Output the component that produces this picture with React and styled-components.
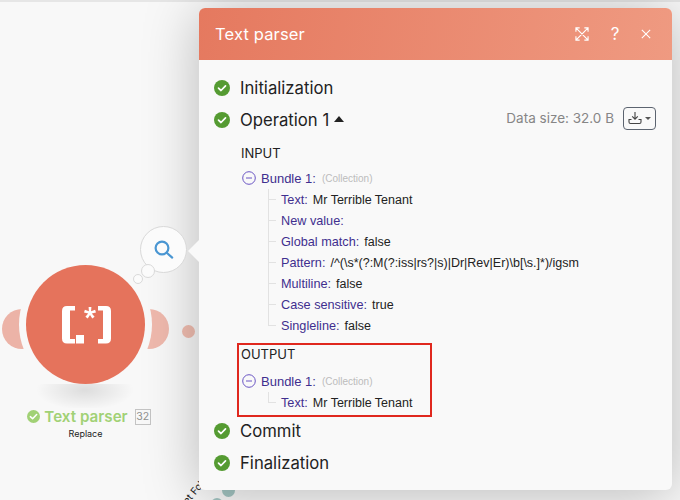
import React from 'react'
import styled, { createGlobalStyle } from 'styled-components'

const Global = createGlobalStyle`
  html, body { margin: 0; padding: 0; background: #f8f8f8; }
  body { font-family: Inter, "Liberation Sans", sans-serif; }
`

const Check = () => (
  <StatusDot>
    <svg width="10" height="10" viewBox="0 0 10 10" fill="none">
      <path d="M1.5 5.2 L4 7.5 L8.5 2.8" stroke="#fff" strokeWidth="1.7" strokeLinecap="round" strokeLinejoin="round" />
    </svg>
  </StatusDot>
)

const Minus = () => (
  <MinusIcon width="14" height="14" viewBox="0 0 14 14" fill="none">
    <circle cx="7" cy="7" r="6.3" stroke="#6a55c4" strokeWidth="1" />
    <path d="M4 7 H10" stroke="#6a55c4" strokeWidth="1" />
  </MinusIcon>
)

const Field = ({ name, value, last }) => (
  <FieldRow $last={last}>
    <FieldName>{name}:</FieldName>
    {value && <FieldValue>{value}</FieldValue>}
  </FieldRow>
)

const Bundle = ({ fields }) => (
  <>
    <BundleRow>
      <Minus />
      <BundleName>Bundle 1:</BundleName>
      <BundleType>(Collection)</BundleType>
    </BundleRow>
    <FieldList>
      {fields.map((f, i) => (
        <Field key={f[0]} name={f[0]} value={f[1]} last={i === fields.length - 1} />
      ))}
    </FieldList>
  </>
)

const inputFields = [
  ['Text', 'Mr Terrible Tenant'],
  ['New value', ''],
  ['Global match', 'false'],
  ['Pattern', '/^(\\s*(?:M(?:iss|rs?|s)|Dr|Rev|Er)\\b[\\s.]*)/igsm'],
  ['Multiline', 'false'],
  ['Case sensitive', 'true'],
  ['Singleline', 'false'],
]

export default function App() {
  return (
    <Canvas>
      <Global />
      <TopLine />

      <Ear $side="left" />
      <Ear $side="right" />
      <SmallDot />
      <NodeCircle>
        <svg width="50" height="40" viewBox="0 0 50 40" fill="#fff">
          <path d="M6 1 H14 V5.5 H9 V34 H14 V38.5 H6 Q1 38.5 1 33.5 V6 Q1 1 6 1 Z" />
          <rect x="15" y="30" width="8" height="8.5" />
          <path d="M37 1 H45 Q50 1 50 6 V33.5 Q50 38.5 45 38.5 H37 V34 H42 V5.5 H37 Z" />
          <path d="M27.6 2 H30.4 L30.1 6.3 L34.1 4.7 L35 7.4 L30.8 8.5 L33.6 11.8 L31.3 13.5 L29 9.9 L26.7 13.5 L24.4 11.8 L27.2 8.5 L23 7.4 L23.9 4.7 L27.9 6.3 Z" />
        </svg>
      </NodeCircle>
      <NodeShadow />
      <NodeLabel>
        <NodeTitle>
          <NodeCheck>
            <svg width="9" height="9" viewBox="0 0 10 10" fill="none">
              <path d="M1.5 5.2 L4 7.5 L8.5 2.8" stroke="#fff" strokeWidth="1.7" strokeLinecap="round" strokeLinejoin="round" />
            </svg>
          </NodeCheck>
          Text parser
          <NodeCount>32</NodeCount>
        </NodeTitle>
        <NodeSub>Replace</NodeSub>
      </NodeLabel>

      <Bubble>
        <svg width="22" height="22" viewBox="0 0 22 22" fill="none" stroke="#4a96d2" strokeWidth="2.2" strokeLinecap="round">
          <circle cx="9" cy="9" r="6.4" />
          <path d="M14 14 L19.2 18.6" />
        </svg>
      </Bubble>
      <BubbleDot $x={141} $y={264} $s={12} />
      <BubbleDot $x={133} $y={274} $s={8} />

      <CanvasText $x={171} $y={483} $r={-50} $size={10}>Get Folder</CanvasText>
      <CanvasText $x={516} $y={480} $r={0} $size={9.5}>Create a folder</CanvasText>
      <Teal $x={222} $y={484} $s={13} />
      <Teal $x={211} $y={498} $s={12} />

      <Panel>
        <Notch />
        <Header>
          <HeaderTitle>Text parser</HeaderTitle>
          <HeaderIcons>
            <svg width="14" height="14" viewBox="0 0 15 15" fill="none" stroke="#fff" strokeWidth="1.2">
              <path d="M1 5 V1 H5 M10 1 H14 V5 M14 10 V14 H10 M5 14 H1 V10 M1.5 1.5 L13.5 13.5 M13.5 1.5 L1.5 13.5" />
            </svg>
            <HelpMark>?</HelpMark>
            <svg width="10" height="10" viewBox="0 0 12 12" fill="none" stroke="#fff" strokeWidth="1.3">
              <path d="M1 1 L11 11 M11 1 L1 11" />
            </svg>
          </HeaderIcons>
        </Header>

        <Body>
          <StepRow>
            <Check />
            <StepName>Initialization</StepName>
          </StepRow>
          <StepRow>
            <Check />
            <StepName>Operation 1</StepName>
            <Caret />
            <DataSize>Data size: 32.0 B</DataSize>
            <DownloadButton>
              <svg width="14" height="14" viewBox="0 0 14 14" fill="none" stroke="#444" strokeWidth="1.1">
                <path d="M7 1 V8 M4.2 5.4 L7 8.2 L9.8 5.4 M3.5 8.5 H1 V11 Q1 12.5 2.5 12.5 H11.5 Q13 12.5 13 11 V8.5 H10.5" />
              </svg>
              <DownCaret />
            </DownloadButton>
          </StepRow>

          <Section>
            <SectionTitle $gap={5}>INPUT</SectionTitle>
            <Bundle fields={inputFields} />
          </Section>

          <OutputBox>
            <SectionTitle $gap={7}>OUTPUT</SectionTitle>
            <Bundle fields={[['Text', 'Mr Terrible Tenant']]} />
          </OutputBox>

          <StepRow>
            <Check />
            <StepName>Commit</StepName>
          </StepRow>
          <StepRow>
            <Check />
            <StepName>Finalization</StepName>
          </StepRow>
        </Body>
      </Panel>
    </Canvas>
  )
}

const Canvas = styled.div`
  position: relative;
  width: 680px;
  height: 500px;
  overflow: hidden;
  background: #f8f8f8;
`

const TopLine = styled.div`
  position: absolute;
  left: 0;
  top: 0;
  width: 680px;
  height: 2px;
  background: #e6e6e6;
`

const Ear = styled.div`
  position: absolute;
  top: 309px;
  left: ${p => (p.$side === 'left' ? '2px' : '129px')};
  width: 40px;
  height: 40px;
  border-radius: 50%;
  background: ${p => (p.$side === 'left' ? '#ecb3a7' : '#efb9ad')};
`

const SmallDot = styled.div`
  position: absolute;
  left: 182px;
  top: 325px;
  width: 13px;
  height: 13px;
  border-radius: 50%;
  background: #f0bdb0;
`

const NodeShadow = styled.div`
  position: absolute;
  left: 36px;
  top: 384px;
  width: 98px;
  height: 24px;
  background: radial-gradient(ellipse 49px 20px at 50% 6px, rgba(0, 0, 0, 0.11), transparent);
`

const NodeCircle = styled.div`
  position: absolute;
  left: 26px;
  top: 265px;
  width: 119px;
  height: 119px;
  border-radius: 50%;
  background: #e5735c;
  box-shadow: 0 0 0 7px #f8f8f8;
  display: flex;
  align-items: center;
  justify-content: center;
`

const NodeLabel = styled.div`
  position: absolute;
  left: 0;
  top: 407px;
  width: 171px;
  display: flex;
  flex-direction: column;
  align-items: center;
`

const NodeTitle = styled.div`
  margin-left: 7px;
  display: flex;
  align-items: center;
  font-size: 15.2px;
  font-weight: 600;
  line-height: 19px;
  color: #a1d175;
`

const NodeCheck = styled.span`
  width: 13px;
  height: 13px;
  margin-right: 4px;
  border-radius: 50%;
  background: #a1d175;
  display: flex;
  align-items: center;
  justify-content: center;
`

const NodeCount = styled.span`
  width: 16px;
  height: 16px;
  margin-left: 7px;
  box-sizing: border-box;
  border: 1px solid #c4c4c4;
  font-size: 10.5px;
  font-weight: 400;
  line-height: 14px;
  text-align: center;
  color: #8f8f8f;
`

const NodeSub = styled.div`
  font-size: 9px;
  line-height: 16px;
  color: #222;
`

const Bubble = styled.div`
  position: absolute;
  z-index: 1;
  left: 140px;
  top: 226px;
  width: 45px;
  height: 45px;
  border: 1px solid #d9d9d9;
  border-radius: 50%;
  background: #fbfbfb;
  display: flex;
  align-items: center;
  justify-content: center;
`

const BubbleDot = styled.div`
  position: absolute;
  z-index: 1;
  left: ${p => p.$x}px;
  top: ${p => p.$y}px;
  width: ${p => p.$s}px;
  height: ${p => p.$s}px;
  border: 1px solid #d9d9d9;
  border-radius: 50%;
  background: #fbfbfb;
`

const CanvasText = styled.div`
  position: absolute;
  left: ${p => p.$x}px;
  top: ${p => p.$y}px;
  font-size: ${p => p.$size}px;
  color: #222;
  white-space: nowrap;
  transform: rotate(${p => p.$r}deg);
`

const Teal = styled.div`
  position: absolute;
  left: ${p => p.$x}px;
  top: ${p => p.$y}px;
  width: ${p => p.$s}px;
  height: ${p => p.$s}px;
  border-radius: 50%;
  background: #a3c5c2;
`

const Panel = styled.div`
  position: absolute;
  left: 199px;
  top: 8px;
  width: 473px;
  height: 482px;
  border-radius: 6px;
  background: #f9f9f9;
  box-shadow: 0 4px 55px rgba(0, 0, 0, 0.26);
`

const Notch = styled.div`
  position: absolute;
  left: -11px;
  top: 232px;
  width: 0;
  height: 0;
  border-top: 11px solid transparent;
  border-bottom: 11px solid transparent;
  border-right: 11px solid #f9f9f9;
`

const Header = styled.div`
  height: 52px;
  padding: 0 16px;
  display: flex;
  align-items: center;
  justify-content: space-between;
  border-radius: 6px 6px 0 0;
  background: linear-gradient(100deg, #e5795f 0%, #ef9a81 100%);
`

const HeaderTitle = styled.div`
  font-size: 16.5px;
  letter-spacing: 0.15px;
  color: #fff;
`

const HeaderIcons = styled.div`
  display: flex;
  align-items: center;
  gap: 20px;
  padding-right: 5px;
`

const HelpMark = styled.span`
  width: 12px;
  font-size: 17px;
  text-align: center;
  color: #fff;
`

const Body = styled.div`
  padding: 12px 16px 0 15px;
`

const StepRow = styled.div`
  height: 32px;
  display: flex;
  align-items: center;
`

const StatusDot = styled.span`
  width: 16px;
  height: 16px;
  margin-right: 10px;
  border-radius: 50%;
  background: #559b32;
  display: flex;
  align-items: center;
  justify-content: center;
`

const StepName = styled.span`
  font-size: 16.7px;
  color: #222;
`

const Caret = styled.span`
  width: 0;
  height: 0;
  margin-left: 5px;
  margin-bottom: 3px;
  border-left: 5px solid transparent;
  border-right: 5px solid transparent;
  border-bottom: 6px solid #222;
`

const DataSize = styled.span`
  margin-left: auto;
  margin-bottom: 4px;
  font-size: 13.5px;
  color: #868686;
`

const DownloadButton = styled.div`
  width: 33px;
  height: 23px;
  margin-left: 9px;
  margin-bottom: 4px;
  box-sizing: border-box;
  border: 1px solid #5c6470;
  border-radius: 4px;
  display: flex;
  align-items: center;
  justify-content: center;
  gap: 3px;
`

const DownCaret = styled.span`
  width: 0;
  height: 0;
  border-left: 3px solid transparent;
  border-right: 3px solid transparent;
  border-top: 3px solid #555;
`

const Section = styled.div`
  margin: 8px 0 0 27px;
  padding-bottom: 7px;
`

const SectionTitle = styled.div`
  height: 18px;
  margin-bottom: ${p => p.$gap}px;
  font-size: 13px;
  line-height: 18px;
  color: #222;
`

const OutputBox = styled.div`
  width: 195px;
  height: 74px;
  margin: 0 0 -2px 23px;
  padding-left: 2px;
  box-sizing: border-box;
  border: 2px solid #e0281e;
`

const BundleRow = styled.div`
  height: 22px;
  display: flex;
  align-items: center;
  font-family: "Liberation Sans", Arial, sans-serif;
  font-size: 13px;
`

const MinusIcon = styled.svg`
  margin-left: 1px;
  margin-right: 5px;
`

const BundleName = styled.span`
  color: #3f2f8f;
`

const BundleType = styled.span`
  margin-left: 6px;
  font-size: 10px;
  color: #bcbcbc;
`

const FieldList = styled.div`
  margin-left: 27px;
`

const FieldRow = styled.div`
  position: relative;
  height: 21px;
  padding-left: 13px;
  display: flex;
  align-items: center;
  font-family: "Liberation Sans", Arial, sans-serif;
  font-size: 12.7px;
  &::before {
    content: '';
    position: absolute;
    left: 0;
    top: 0;
    height: ${p => (p.$last ? '11px' : '21px')};
    width: 1px;
    background: #e2e2e2;
  }
  &::after {
    content: '';
    position: absolute;
    left: 0;
    top: 10px;
    width: 8px;
    height: 1px;
    background: #e2e2e2;
  }
`

const FieldName = styled.span`
  color: #3f2f8f;
`

const FieldValue = styled.span`
  margin-left: 5px;
  font-size: 12.5px;
  color: #222;
`
